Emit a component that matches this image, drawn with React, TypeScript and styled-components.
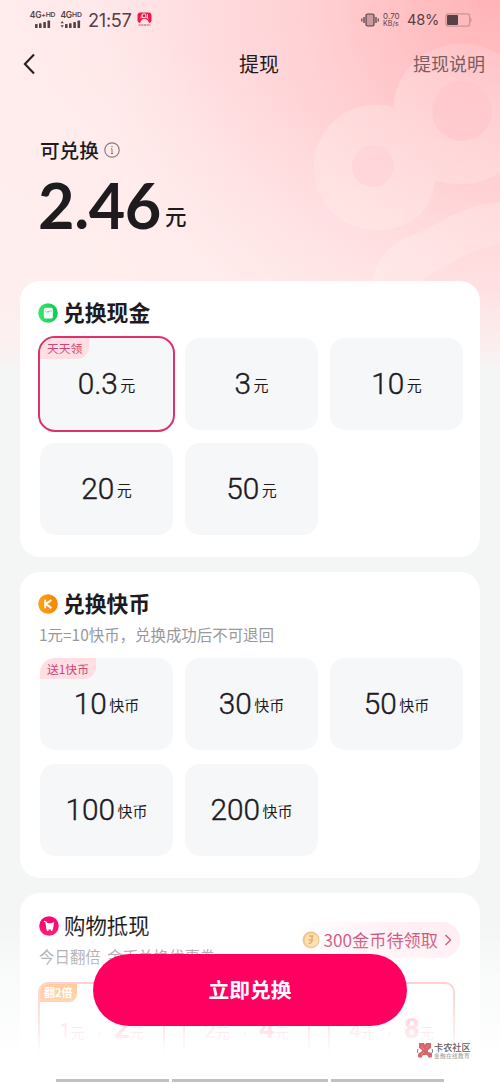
import React from "react";
import styled, { createGlobalStyle } from "styled-components";

const cjk = `"Noto Sans CJK SC", sans-serif`;

const Global = createGlobalStyle`
  * { box-sizing: border-box; }
  body { margin: 0; background: #f4f6f6; font-family: ${cjk}; color: #1d1b1e; }
`;

const Page = styled.main`
  position: relative;
  width: 500px;
  height: 1083px;
  overflow: hidden;
  background: #f4f6f6;
`;

const Backdrop = styled.svg`
  position: absolute;
  top: 0;
  left: 0;
`;

const Content = styled.div`
  position: relative;
  display: flex;
  flex-direction: column;
`;

const StatusBar = styled.div`
  height: 39px;
  padding: 0 28px 0 29px;
  display: flex;
  justify-content: space-between;
  align-items: center;
  color: #574146;
`;

const StatusGroup = styled.div<{ $left?: number }>`
  display: flex;
  align-items: center;
  margin-left: ${(p) => p.$left ?? 0}px;
`;

const Clock = styled.span<{ $size: number }>`
  font: 400 ${(p) => p.$size}px/24px Inter, sans-serif;
  letter-spacing: -0.3px;
`;

const Speed = styled.div`
  margin: 0 6px 0 4px;
  width: 18px;
  display: flex;
  flex-direction: column;
  font: 400 8px/8px Inter, sans-serif;
  white-space: nowrap;
`;

const SpeedUnit = styled.span`
  font-size: 7px;
`;

const Signal = styled.div<{ $gap: number; $width: number }>`
  display: flex;
  flex-direction: column;
  align-items: center;
  width: ${(p) => p.$width}px;
  margin-right: ${(p) => p.$gap}px;
  font: 600 8.5px/9px Inter, sans-serif;
  letter-spacing: -0.2px;
  white-space: nowrap;
`;

const SignalLabel = styled.span`
  display: flex;
  align-items: flex-start;
`;

const Tiny = styled.span`
  font-size: 6.8px;
  line-height: 7px;
`;

const NavBar = styled.header`
  height: 50px;
  padding: 0 15px 0 23px;
  display: grid;
  grid-template-columns: 1fr 40px 1fr;
  align-items: center;
`;

const NavTitle = styled.h1`
  margin: 0 -5px 0 5px;
  font-size: 20px;
  line-height: 30px;
  font-weight: 400;
  white-space: nowrap;
`;

const NavLink = styled.span`
  justify-self: end;
  margin-bottom: 2px;
  font-size: 18px;
  line-height: 28px;
  color: #7c5d62;
`;

const Hero = styled.section`
  height: 192px;
  padding: 46px 40px 0;
`;

const HeroLabel = styled.div`
  height: 30px;
  display: flex;
  align-items: center;
  gap: 5px;
  font-size: 19.6px;
  line-height: 30px;
  font-weight: 500;
`;

const Balance = styled.div`
  display: flex;
  align-items: flex-start;
  margin-left: -2px;
  height: 76px;
`;

const BalanceValue = styled.span`
  padding-top: 2px;
  font: 700 63px/76px Lato, sans-serif;
  font-kerning: none;
  letter-spacing: -0.4px;
`;

const BalanceUnit = styled.span`
  margin-left: 4px;
  padding-top: 31px;
  font-size: 21.5px;
  line-height: 40px;
  font-weight: 500;
`;

const CardList = styled.div`
  padding: 0 20px;
  display: flex;
  flex-direction: column;
  gap: 15px;
`;

const Card = styled.section<{ $height: number; $top?: number }>`
  height: ${(p) => p.$height}px;
  padding: ${(p) => p.$top ?? 16}px 17px 0 18px;
  border-radius: 20px;
  background: #fff;
`;

const CardHead = styled.div<{ $indent?: number }>`
  height: 32px;
  padding-left: ${(p) => p.$indent ?? 0}px;
  display: flex;
  align-items: center;
  gap: 5px;
`;

const CardTitle = styled.h2<{ $light?: boolean }>`
  margin: 0 0 2px;
  font-size: ${(p) => (p.$light ? 21.4 : 21.8)}px;
  line-height: 32px;
  font-weight: ${(p) => (p.$light ? 400 : 700)};
`;

const CardNote = styled.p`
  margin: 0;
  height: 30px;
  padding-left: 1px;
  font-size: 15.45px;
  line-height: 28px;
  color: #99999c;
  word-spacing: 3px;
`;

const Options = styled.div<{ $top: number; $rowGap: number }>`
  margin-top: ${(p) => p.$top}px;
  padding: 0 0 0 2px;
  display: grid;
  grid-template-columns: repeat(3, 133px);
  grid-auto-rows: 92px;
  column-gap: 12px;
  row-gap: ${(p) => p.$rowGap}px;
`;

const Option = styled.button<{ $active?: boolean }>`
  position: relative;
  margin: ${(p) => (p.$active ? "-2px" : "0")};
  padding: 0;
  display: flex;
  align-items: center;
  justify-content: center;
  border: ${(p) => (p.$active ? "2px solid #e0316c" : "0")};
  border-radius: ${(p) => (p.$active ? 17 : 15)}px;
  background: #f6f7f9;
  color: #1d1b1e;
  overflow: hidden;
`;

const Amount = styled.span`
  display: flex;
  align-items: center;
  gap: 2.5px;
`;

const AmountValue = styled.span`
  font: 300 29.8px/40px Roboto, sans-serif;
  -webkit-text-stroke: 0.4px currentColor;
`;

const AmountUnit = styled.span`
  padding-top: 2px;
  font: 400 15px/40px ${cjk};
`;

const Tag = styled.span<{ $inset?: boolean }>`
  position: absolute;
  top: 0;
  left: 0;
  height: 21px;
  padding: 0 7px;
  border-radius: 0 0 12px 0;
  background: #ffdfe3;
  color: #cd4778;
  font: 400 11.8px / ${(p) => (p.$inset ? 20 : 22)}px ${cjk};
`;

const CoinPill = styled.div`
  margin: 28px 3px 0 auto;
  height: 36px;
  padding: 0 8px 0 7px;
  display: flex;
  align-items: center;
  border-radius: 18px;
  background: linear-gradient(90deg, #fff, #fff1f5 55%, #ffedf2);
  color: #c94673;
  font: 400 17.2px/36px ${cjk};
`;

const CoinText = styled.span`
  margin: 0 6px 0 3px;
`;

const Coupons = styled.div`
  margin-top: 10px;
  display: grid;
  grid-template-columns: repeat(3, 127px);
  column-gap: 18px;
`;

const Coupon = styled.div`
  position: relative;
  height: 96px;
  padding-top: 25px;
  display: flex;
  justify-content: center;
  align-items: baseline;
  border: 2px solid #ffa0a4;
  border-radius: 10px;
  color: #ff9fb6;
  font: 400 14px/40px ${cjk};
`;

const CouponValue = styled.b<{ $big?: boolean }>`
  font: ${(p) => (p.$big ? "700 28px" : "400 21px")} / 40px Roboto, sans-serif;
  color: ${(p) => (p.$big ? "#ff7fa0" : "#ff9fb6")};
`;

const CouponArrow = styled.span`
  width: 29px;
  text-align: center;
`;

const CouponTag = styled.span`
  position: absolute;
  top: 0;
  left: 0;
  height: 18px;
  padding: 0 4px;
  border-radius: 8px 0 8px 0;
  background: #ff9636;
  color: #fff;
  font: 700 11px/17px ${cjk};
`;

const Footer = styled.footer`
  position: absolute;
  left: 0;
  right: 0;
  bottom: 0;
  height: 160px;
  padding-top: 31px;
  display: flex;
  flex-direction: column;
  align-items: center;
  background: linear-gradient(
    rgba(255, 255, 255, 0) 0,
    rgba(255, 255, 255, 0.25) 30px,
    rgba(255, 255, 255, 0.52) 62px,
    rgba(255, 255, 255, 0.76) 105px,
    #fff 130px
  );
`;

const Submit = styled.button`
  flex: none;
  width: 314px;
  height: 72px;
  border: 0;
  border-radius: 36px;
  background: #ff0060;
  color: #fff;
  font: 700 20.8px/70px ${cjk};
  padding: 0 0 2px;
`;

const Watermark = styled.div`
  align-self: flex-end;
  margin: 16px 29px 0 0;
  display: flex;
  gap: 1px;
  color: #625b5d;
`;

const WatermarkText = styled.div`
  width: 37px;
  display: flex;
  flex-direction: column;
  font: 500 9.2px/10px ${cjk};
  white-space: nowrap;
`;

const WatermarkSub = styled.span`
  padding-top: 1px;
  font-size: 5.6px;
  line-height: 6px;
  letter-spacing: 0.4px;
  color: #aaa;
`;

const HomeBar = styled.div`
  margin-top: auto;
  width: 388px;
  height: 4px;
  display: grid;
  grid-template-columns: 113px 156px 113px;
  gap: 3px;
`;

const HomeSegment = styled.i`
  height: 3px;
  background: #c1c1c1;
`;

const Bars = ({ arrows }: { arrows?: boolean }) => (
  <svg width={arrows ? 22 : 18} height="9" viewBox={arrows ? "-4 0 22 9" : "0 0 18 9"} fill="currentColor">
    {arrows && <path d="M-3.5 3.2-1.8 1l1.7 2.2zM-3.5 5.2h3.4L-1.8 7.6z" />}
    <rect x="1" y="4" width="2.6" height="4" rx=".6" />
    <rect x="5" y="3.200" width="2.6" height="4.800" rx=".6" />
    <rect x="9.3" y="2" width="2.6" height="6" rx=".6" />
    <rect x="13.5" y="0.600" width="2.6" height="7.400" rx=".6" />
  </svg>
);

const AppBadge = () => (
  <svg width="15" height="15" viewBox="0 0 15 15">
    <rect x=".5" y=".5" width="14" height="10.500" rx="3" fill="#ef174b" />
    <path d="M3 11q1-4 4.500-4t4.500 4z" fill="#ffe2df" />
    <circle cx="7" cy="3.800" r="2" fill="none" stroke="#ffd9dc" strokeWidth="1.100" />
    <path d="M10.500 2v4M4 4.500v2M9 5l2.500 2" stroke="#ffc6cd" strokeWidth="1" />
    <path d="M1.500 13h12" stroke="#d98374" strokeWidth="1.400" strokeDasharray="2.200 .5" />
  </svg>
);

const Vibrate = () => (
  <svg width="18" height="14" viewBox="0 0 18 14" fill="none" stroke="currentColor">
    <rect x="5" y="1" width="8" height="12" rx="1.500" fill="#c99a9d" strokeWidth="1.200" />
    <path d="M3 4v6M15 4v6" strokeWidth="1.300" />
    <path d="M.8 5.500v3M17.200 5.500v3" strokeWidth="1.200" />
  </svg>
);

const Battery = () => (
  <svg width="27" height="14" viewBox="0 0 27 14">
    <rect x=".8" y=".8" width="23.800" height="12.400" rx="2.500" fill="none" stroke="#c9979a" strokeWidth="1.300" />
    <rect x="2" y="2" width="11" height="10" rx="1" fill="#574146" />
    <path d="M25.800 5v4" stroke="#c9979a" strokeWidth="1.300" />
  </svg>
);

const Back = () => (
  <svg width="14" height="22" viewBox="0 0 14 22" fill="none" stroke="#242023" strokeWidth="2.100">
    <path d="M11 1.500 1.900 11l9.100 9.500" />
  </svg>
);

const Info = () => (
  <svg width="16" height="16" viewBox="0 0 16 16" fill="none" stroke="#8d7b7f" strokeWidth="1.200">
    <circle cx="8" cy="8" r="7.200" />
    <path d="M7 6.800h1v4.500M6.800 11.500h2.400" strokeWidth="1" />
    <circle cx="8" cy="4.600" r=".4" fill="#8d7b7f" strokeWidth=".6" />
  </svg>
);

const CashIcon = () => (
  <svg width="20" height="20" viewBox="0 0 20 20">
    <defs>
      <linearGradient id="cash">
        <stop stopColor="#39e56c" />
        <stop offset="1" stopColor="#0acb58" />
      </linearGradient>
    </defs>
    <circle cx="10" cy="10" r="9.800" fill="url(#cash)" />
    <rect x="5.800" y="4.800" width="9" height="10.800" rx="1.700" fill="#fff" />
    <path d="M6.500 8q1.800 2 3.800.8T14 8" fill="none" stroke="#73dfaa" strokeWidth=".9" />
    <circle cx="10.300" cy="8.800" r=".8" fill="#3ad982" />
  </svg>
);

const KIcon = () => (
  <svg width="20" height="20" viewBox="0 0 20 20">
    <defs>
      <linearGradient id="kcoin" x1="0" x2="1">
        <stop stopColor="#ffa11c" />
        <stop offset="1" stopColor="#f68500" />
      </linearGradient>
    </defs>
    <circle cx="10" cy="10" r="9.800" fill="url(#kcoin)" />
    <path d="M7.200 5.800v8.400M13.300 6 8 10l5.400 4.100" fill="none" stroke="#fff" strokeWidth="2" />
  </svg>
);

const CartIcon = () => (
  <svg width="20" height="20" viewBox="0 0 20 20">
    <circle cx="10" cy="10" r="9.800" fill="#fb0872" />
    <path d="M5 5.400 7 6l1 6.800h5.500" fill="none" stroke="#fff" strokeWidth="1.300" />
    <path d="M6.800 6.300q4 2.200 8.400-.4l-1.200 7H7.800z" fill="#fff" />
    <circle cx="8.700" cy="14" r="1" fill="#fff" />
    <circle cx="12.700" cy="14" r="1" fill="#fff" />
  </svg>
);

const Coin = () => (
  <svg width="18" height="18" viewBox="0 0 18 18">
    <circle cx="9" cy="9" r="8.500" fill="#f0bc83" />
    <circle cx="9.500" cy="9" r="6.800" fill="#ffdba0" />
    <path d="M7 5h4.500M10 5v4q0 3-3.500 3.500M6.500 9H11" fill="none" stroke="#e3a263" strokeWidth="1.500" />
  </svg>
);

const Chevron = () => (
  <svg width="8" height="12" viewBox="0 0 8 12" fill="none" stroke="#c94673" strokeWidth="1.500">
    <path d="m1.500 1 5 5-5 5" />
  </svg>
);

const WatermarkLogo = () => (
  <svg width="16" height="17" viewBox="0 0 16 17" fill="#d7666b">
    <path d="M2 1h5l1 2 1-2h5v5l-3 2v2l4 1v4l-3 1-2-3H6l-2 3-3-1v-3l4-3V8L2 6z" />
    <path d="M4 4l3 3M12 3 9 6M4 13l3-3" stroke="#e9a0a3" strokeWidth=".6" />
    <path d="M1 7q-1.500 2 0 4M15 7q1.500 2 0 4" fill="none" stroke="#625b5d" strokeWidth=".8" />
  </svg>
);

const HeroArt = () => (
  <Backdrop width="500" height="400" viewBox="0 0 500 400">
    <defs>
      <radialGradient id="glow" cx="490" cy="0" r="480" gradientUnits="userSpaceOnUse">
        <stop stopColor="#ffb4b7" />
        <stop offset=".2" stopColor="#ffc3c6" />
        <stop offset=".4" stopColor="#ffd2d5" />
        <stop offset=".6" stopColor="#ffdcdf" />
        <stop offset=".82" stopColor="#ffe9ea" />
        <stop offset="1" stopColor="#ffebec" />
      </radialGradient>
      <linearGradient id="fade" x1="0" y1="290" x2="0" y2="375" gradientUnits="userSpaceOnUse">
        <stop stopColor="#f4f6f6" stopOpacity="0" />
        <stop offset=".6" stopColor="#f8f2f2" stopOpacity=".5" />
        <stop offset="1" stopColor="#f4f6f6" />
      </linearGradient>
      <linearGradient id="soften" x1="180" y1="340" x2="300" y2="100" gradientUnits="userSpaceOnUse">
        <stop stopColor="#ffefee" stopOpacity=".7" />
        <stop offset="1" stopColor="#ffefee" stopOpacity="0" />
      </linearGradient>
      <linearGradient id="petal" x1="470" y1="40" x2="340" y2="230" gradientUnits="userSpaceOnUse">
        <stop stopColor="#ffdddf" stopOpacity=".25" />
        <stop offset=".4" stopColor="#ffe1e2" stopOpacity=".5" />
        <stop offset="1" stopColor="#ffe9e8" stopOpacity=".6" />
      </linearGradient>
      <linearGradient id="arm" x1="380" y1="280" x2="500" y2="220" gradientUnits="userSpaceOnUse">
        <stop stopColor="#ffebea" stopOpacity=".6" />
        <stop offset="1" stopColor="#ffe6e6" stopOpacity=".42" />
      </linearGradient>
    </defs>
    <rect width="500" height="400" fill="url(#glow)" />
    <rect width="500" height="400" fill="url(#soften)" />
    <path
      fill="url(#petal)"
      d="M394 108C393 75 422 44 462 44c38 0 70 30 70 70 0 44-43 83-97 66-1 29-24 50-58 50-36 0-63-27-63-63 0-42 42-73 80-59z"
    />
    <circle cx="462" cy="111" r="30" fill="#ffc4ca" fillOpacity=".6" />
    <circle cx="373" cy="166" r="21" fill="#ffd0d5" fillOpacity=".55" />
    <path fill="url(#arm)" d="M370 300c0-33 16-56 43-65 24-8 47-31 87-33v42c-35 7-52 22-77 34l-20 22z" />
    <rect width="500" height="400" fill="url(#fade)" />
  </Backdrop>
);

type Item = { value: string; tag?: string; active?: boolean };

const cash: Item[] = [
  { value: "0.3", tag: "天天领", active: true },
  { value: "3" },
  { value: "10" },
  { value: "20" },
  { value: "50" },
];

const coins: Item[] = [
  { value: "10", tag: "送1快币" },
  { value: "30" },
  { value: "50" },
  { value: "100" },
  { value: "200" },
];

const coupons = [
  { from: 1, to: 2, tag: "翻2倍" },
  { from: 2, to: 4 },
  { from: 4, to: 8 },
];

const OptionGrid = ({ items, unit, top, rowGap }: { items: Item[]; unit: string; top: number; rowGap: number }) => (
  <Options $top={top} $rowGap={rowGap}>
    {items.map((item) => (
      <Option key={item.value} $active={item.active}>
        {item.tag && <Tag $inset={item.active}>{item.tag}</Tag>}
        <Amount>
          <AmountValue>{item.value}</AmountValue>
          <AmountUnit>{unit}</AmountUnit>
        </Amount>
      </Option>
    ))}
  </Options>
);

export default function App() {
  return (
    <Page>
      <Global />
      <HeroArt />
      <Content>
        <StatusBar>
          <StatusGroup>
            <Signal $gap={4} $width={27}>
              <SignalLabel>4G<Tiny>+HD</Tiny></SignalLabel>
              <Bars />
            </Signal>
            <Signal $gap={6} $width={22}>
              <SignalLabel>4G<Tiny>HD</Tiny></SignalLabel>
              <Bars arrows />
            </Signal>
            <Clock $size={18.2}>21:57</Clock>
            <StatusGroup $left={5}>
              <AppBadge />
            </StatusGroup>
          </StatusGroup>
          <StatusGroup>
            <Vibrate />
            <Speed>
              0.70
              <SpeedUnit>KB/s</SpeedUnit>
            </Speed>
            <Clock $size={14.6}>48%</Clock>
            <StatusGroup $left={6}>
              <Battery />
            </StatusGroup>
          </StatusGroup>
        </StatusBar>
        <NavBar>
          <Back />
          <NavTitle>提现</NavTitle>
          <NavLink>提现说明</NavLink>
        </NavBar>
        <Hero>
          <HeroLabel>
            可兑换
            <Info />
          </HeroLabel>
          <Balance>
            <BalanceValue>2.46</BalanceValue>
            <BalanceUnit>元</BalanceUnit>
          </Balance>
        </Hero>
        <CardList>
          <Card $height={276}>
            <CardHead>
              <CashIcon />
              <CardTitle>兑换现金</CardTitle>
            </CardHead>
            <OptionGrid items={cash} unit="元" top={9} rowGap={13} />
          </Card>
          <Card $height={306}>
            <CardHead>
              <KIcon />
              <CardTitle>兑换快币</CardTitle>
            </CardHead>
            <CardNote>1元=10快币，兑换成功后不可退回</CardNote>
            <OptionGrid items={coins} unit="快币" top={8} rowGap={14} />
          </Card>
          <Card $height={230} $top={17}>
            <CardHead $indent={1}>
              <CartIcon />
              <CardTitle $light>购物抵现</CardTitle>
              <CoinPill>
                <Coin />
                <CoinText>300金币待领取</CoinText>
                <Chevron />
              </CoinPill>
            </CardHead>
            <CardNote>今日翻倍 金币兑换优惠券</CardNote>
            <Coupons>
              {coupons.map((c) => (
                <Coupon key={c.from}>
                  {c.tag && <CouponTag>{c.tag}</CouponTag>}
                  <CouponValue>{c.from}</CouponValue>元
                  <CouponArrow>›</CouponArrow>
                  <CouponValue $big>{c.to}</CouponValue>元
                </Coupon>
              ))}
            </Coupons>
          </Card>
        </CardList>
      </Content>
      <Footer>
        <Submit>立即兑换</Submit>
        <Watermark>
          <WatermarkLogo />
          <WatermarkText>
            卡农社区
            <WatermarkSub>金融在线教育</WatermarkSub>
          </WatermarkText>
        </Watermark>
        <HomeBar>
          <HomeSegment />
          <HomeSegment />
          <HomeSegment />
        </HomeBar>
      </Footer>
    </Page>
  );
}
